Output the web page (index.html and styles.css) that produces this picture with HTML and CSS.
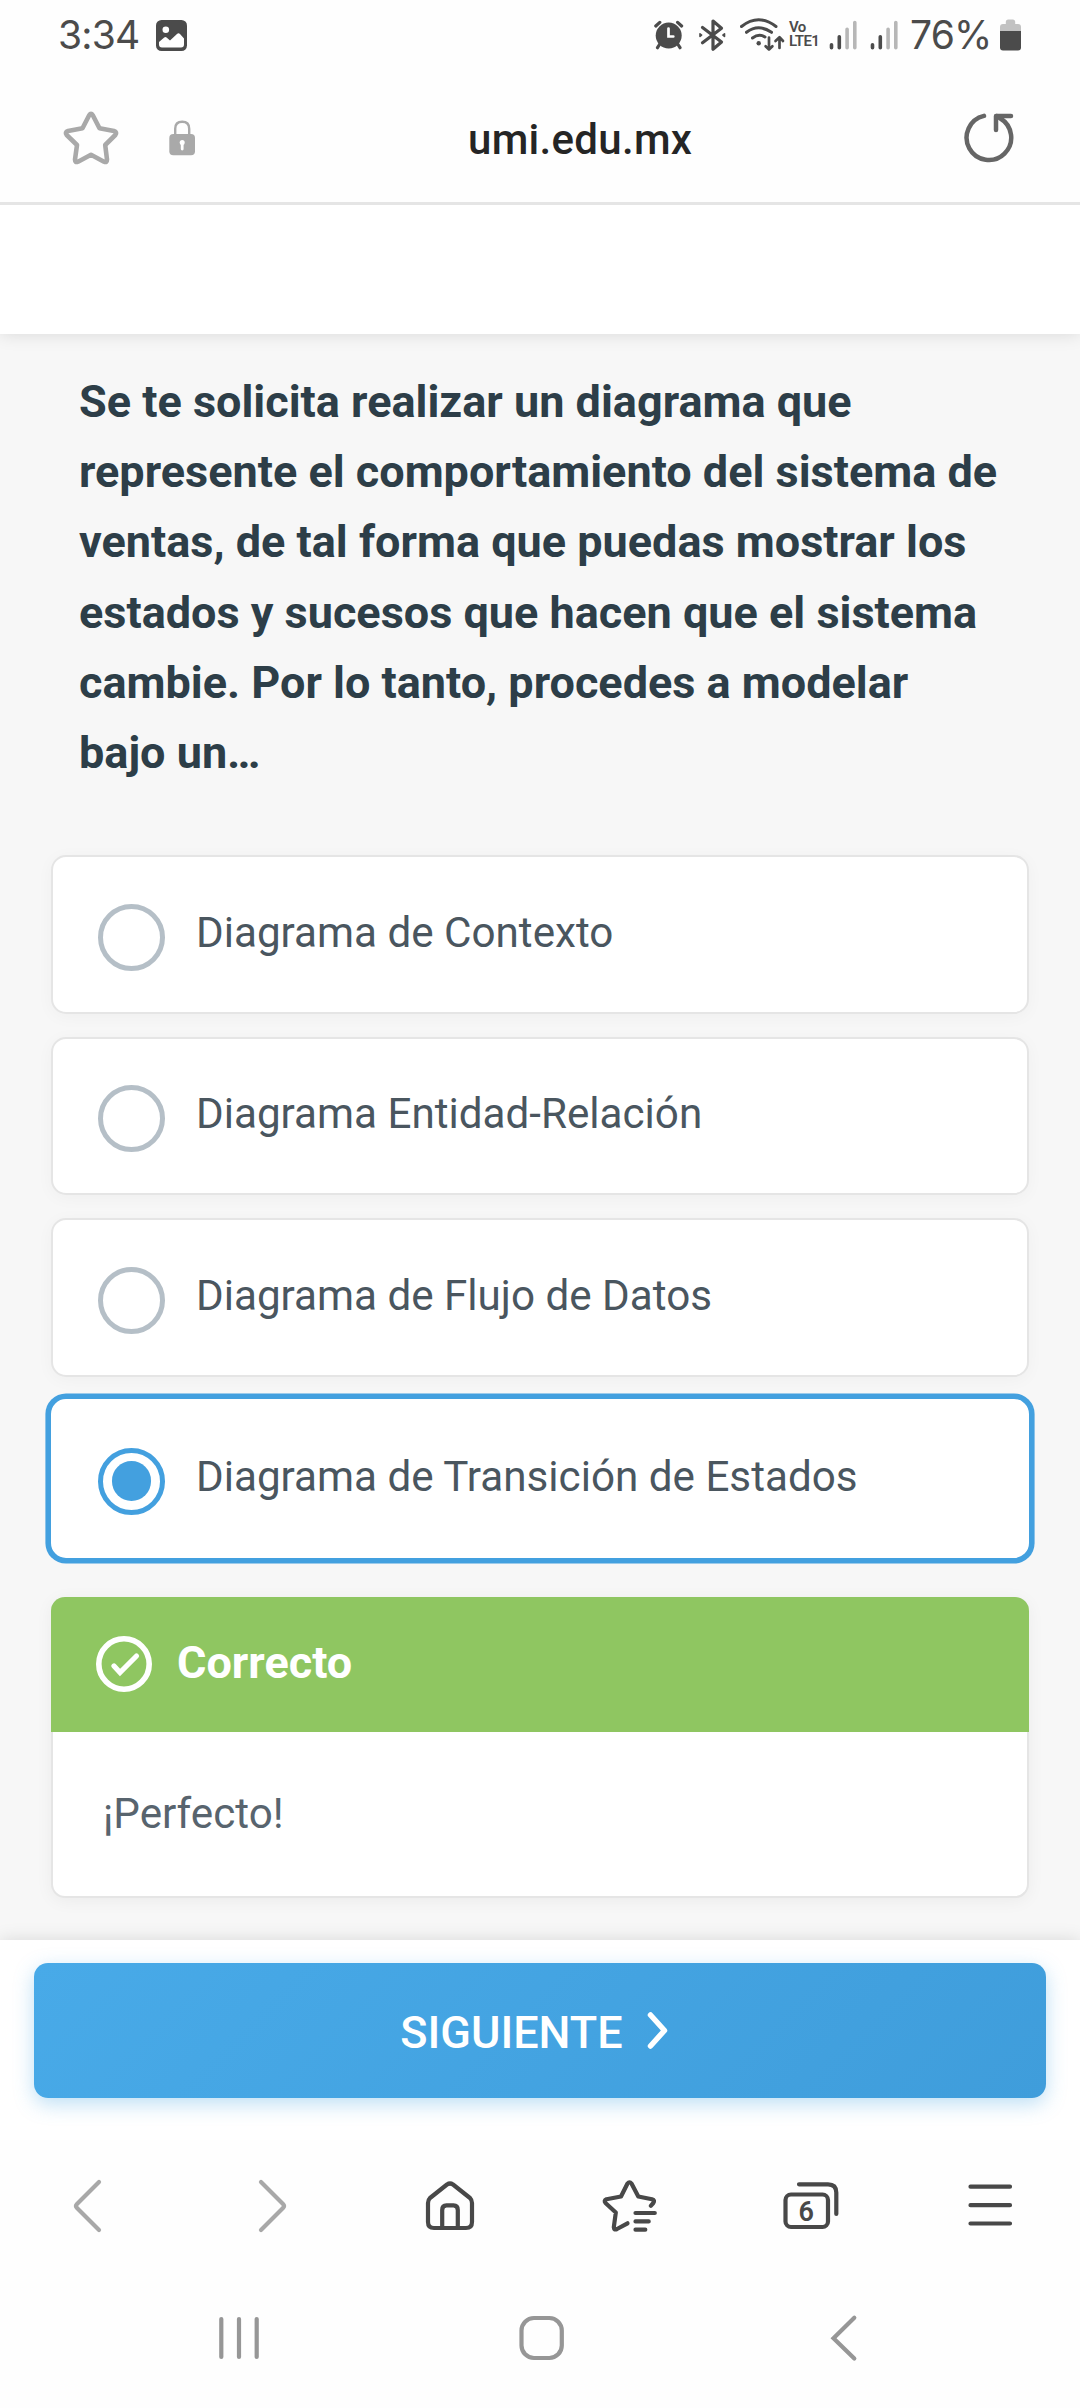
FILE: index.html
```html
<!DOCTYPE html>
<html lang="es">
<head>
<meta charset="utf-8">
<title>umi.edu.mx</title>
<link rel="stylesheet" href="styles.css">
</head>
<body>
<div class="status">
  <span class="clock">3:34</span>
  <svg class="ic photo" width="31" height="32" viewBox="156 20 31 32"><rect x="156" y="20" width="31" height="31" rx="5.5" fill="#4b4b4b"/><circle cx="165.8" cy="29.8" r="3.3" fill="#fff"/><path d="M159 42l5.2-4.6q1.2-.8 2.400 0l3.400 3.200 7-6.600q1.500-1.300 3 0l4 4.600v6q0 3-3 3h-19q-3 0-3-3z" fill="#fff"/></svg>
  <div class="indicators">
    <svg width="30" height="32" viewBox="654 19 30 32" fill="none" stroke="#4b4b4b" stroke-width="3.2" stroke-linecap="round"><circle cx="668.7" cy="35.6" r="13" fill="#4b4b4b" stroke="none"/><path d="M655.8 26l4-3.6M681.6 26l-4-3.6M659.500 44.500l-2 3.200M678 44.500l2 3.200"/><path d="M668.500 28.500v8h4.800" stroke="#fff" stroke-width="2.700"/></svg>
    <svg class="bt" width="29" height="34" viewBox="698 18 29 34" fill="none" stroke="#4b4b4b" stroke-width="3.2" stroke-linecap="round" stroke-linejoin="round"><path d="M702.500 27.500l19 14.500-8.500 7.300V21l8.500 7.300-19 14.500"/><path d="M700 33.800v2.600l1.600-1.300zM724.500 33.800v2.600l-1.600-1.300z" stroke-width="1.600"/></svg>
    <svg class="wifi" width="45" height="35" viewBox="740 17 45 35" fill="none" stroke="#4b4b4b" stroke-width="3" stroke-linecap="round" stroke-linejoin="round"><path d="M741.500 26.500q17-13.500 34.500 0M746.500 32.300q12-9 25 0M752.500 38q6.500-5 12.500-1"/><circle cx="758.700" cy="43.300" r="2.200" fill="#4b4b4b" stroke="none"/><path d="M769 37.500v12M765.600 46.200l3.400 3.400 3.400-3.400M779.500 48v-10M775.500 41l4-3.800 3.500 3.800" stroke-width="2.700"/></svg>
    <div class="volte"><span>Vo</span><span>LTE1</span></div>
    <svg class="sig1" width="28" height="31" viewBox="828.500 19.500 28 31" fill="none" stroke="#4b4b4b" stroke-width="3.600" stroke-linecap="round"><path d="M831 44.200v3M838.800 36.300v10.900"/><path d="M846.600 28.800v18.400M854.300 22v25.200" stroke="#b7b7b7"/></svg>
    <svg class="sig2" width="28" height="31" viewBox="828.500 19.500 28 31" fill="none" stroke="#4b4b4b" stroke-width="3.600" stroke-linecap="round"><path d="M831 44.200v3M838.800 36.300v10.900"/><path d="M846.600 28.800v18.400M854.300 22v25.200" stroke="#b7b7b7"/></svg>
    <span class="percent">76%</span>
    <svg class="battery" width="21" height="32" viewBox="1000 19 21 32"><path d="M1000 32v-5q0-3 3-3h2.800v-2q0-2.500 2.500-2.500h4.400q2.500 0 2.500 2.500v2h2.800q3 0 3 3v5z" fill="#c2c2c2"/><path d="M1000 31h21v16.500q0 3-3 3h-15q-3 0-3-3z" fill="#4b4b4b"/></svg>
  </div>
</div>

<header class="address">
  <svg width="56" height="56" viewBox="63 110 56 56" fill="none" stroke="#a9a9a9" stroke-width="4.600" stroke-linejoin="round"><path d="M89.200 115.200Q91 112.500 92.800 115.200L99.500 128.300L114 131Q117.500 132.200 115.300 135L105.200 145L107 159.500Q107 163 104 161.700L91 154.800L78 161.700Q75 163 75 159.500L77 145L66.700 135Q64.500 132.200 68 131L82.500 128.300Z"/></svg>
  <svg class="lock" width="28" height="38" viewBox="168 119 28 38"><rect x="169.300" y="134" width="25.700" height="21.300" rx="4" fill="#a9a9a9"/><path d="M175.200 136v-7.200q0-7 7-7t7 7V136" fill="none" stroke="#a9a9a9" stroke-width="2.400"/><path d="M182.200 142.500v6.500" stroke="#fff" stroke-width="2.800" stroke-linecap="round"/><circle cx="182.200" cy="142.500" r="2.500" fill="#fff"/></svg>
  <span class="host">umi.edu.mx</span>
  <svg class="reload" width="52" height="54" viewBox="963 110 52 54" fill="none" stroke="#666" stroke-width="4.500" stroke-linecap="round" stroke-linejoin="round"><path d="M984 115.900A22.300 22.300 0 1 0 1000 118.300L997 116M1011 116H996V130"/></svg>
</header>

<div class="page-top"></div>

<main class="quiz">
  <h1 class="question">Se te solicita realizar un diagrama que represente el comportamiento del sistema de ventas, de tal forma que puedas mostrar los estados y sucesos que hacen que el sistema cambie. Por lo tanto, procedes a modelar bajo un…</h1>
  <div class="options">
    <label class="option"><span class="radio"></span><span class="label">Diagrama de Contexto</span></label>
    <label class="option"><span class="radio"></span><span class="label">Diagrama Entidad-Relación</span></label>
    <label class="option"><span class="radio"></span><span class="label">Diagrama de Flujo de Datos</span></label>
    <label class="option selected"><span class="radio"></span><span class="label">Diagrama de Transición de Estados</span></label>
  </div>
  <section class="feedback">
    <div class="feedback-head">
      <svg width="56" height="56" viewBox="0 0 56 56" fill="none" stroke="#fff"><circle cx="28" cy="28" r="25.200" stroke-width="5.600"/><path d="M18 30l6 6.500L40.500 20" stroke-width="5.200" stroke-linecap="round"/></svg>
      <span>Correcto</span>
    </div>
    <p class="feedback-body">¡Perfecto!</p>
  </section>
</main>

<footer class="action">
  <button class="next"><span>SIGUIENTE</span><svg width="22" height="38" viewBox="0 0 22 38" fill="none" stroke="#fff" stroke-width="5.500" stroke-linecap="round" stroke-linejoin="round"><path d="M3.500 3L17.500 18.500 3.500 34"/></svg></button>
</footer>

<nav class="toolbar">
  <svg viewBox="60 2176 60 60" stroke="#a8a8a8"><path d="M99 2182L77 2204Q75 2206 77 2208L99 2230"/></svg>
  <svg viewBox="240.500 2176 60 60" stroke="#a8a8a8"><path d="M261.500 2182L283.500 2204Q285.500 2206 283.500 2208L261.500 2230"/></svg>
  <svg viewBox="420 2176 60 60"><path d="M447 2184.500Q450 2182.500 453 2184.500L470 2198Q472 2200 472 2203V2222Q472 2228 466 2228H434Q428 2228 428 2222V2203Q428 2200 430 2198ZM442.200 2228V2210Q442.200 2205.400 446.500 2205.400H453.500Q457.800 2205.400 457.800 2210V2228"/></svg>
  <svg viewBox="600 2176 60 60"><path d="M650.800 2205.800L653.300 2203Q655.300 2200.200 652 2199.200L638.300 2196.500L631.500 2183.500Q629.500 2181 627.500 2183.500L621 2196.500L606.500 2199.200Q603.500 2200.500 605.500 2203L615.800 2212.500L613.800 2227.200Q614 2230.500 617 2229L627.500 2223.300M635.500 2213H654.800M635.500 2221.400H648.700M635.500 2229.700H645.300"/></svg>
  <svg viewBox="780 2176 60 60"><rect x="785.500" y="2194.500" width="42.500" height="32.500" rx="5.500"/><path d="M799 2184.300H828Q836.300 2184.300 836.300 2192.500V2214"/><text class="tab-count" x="806.300" y="2221">6</text></svg>
  <svg viewBox="960 2176 60 60"><path d="M970.500 2186.700H1010M970.500 2205.200H1010M970.500 2223.500H1010"/></svg>
</nav>

<div class="sysnav">
  <svg viewBox="211 2310 56 56"><path d="M221.300 2319V2357M239 2319V2357M256.700 2319V2357"/></svg>
  <svg viewBox="513.500 2310 56 56"><rect x="521" y="2318" width="40.300" height="40" rx="12.500"/></svg>
  <svg viewBox="816 2310 56 56"><path d="M854.300 2317.700L833.500 2338.200L854.300 2358.500"/></svg>
</div>
</body>
</html>
```

FILE: styles.css
```css
* { box-sizing: border-box; }

body {
  margin: 0;
  width: 1080px;
  height: 2408px;
  display: flex;
  flex-direction: column;
  overflow: hidden;
  background: #fff;
  font-family: Roboto, "Noto Sans", sans-serif;
}

svg { display: block; flex: none; }

/* Phone status bar */
.status {
  height: 72px;
  padding: 0 59px 0 58px;
  display: flex;
  align-items: flex-start;
  background: #fefefe;
  color: #4b4b4b;
  position: relative;
  z-index: 1;
}
.clock, .percent {
  font-family: Inter, Roboto, sans-serif;
  font-size: 39px;
  line-height: 46px;
  font-weight: 400;
  letter-spacing: -0.8px;
  padding-top: 12px;
  white-space: nowrap;
}
.clock { width: 98px; }
.photo { margin-top: 20px; }
.indicators { margin-left: auto; display: flex; align-items: flex-start; }
.indicators svg { margin-top: 19px; }
.indicators .bt { margin: 18px 0 0 14px; }
.indicators .wifi { margin: 17px 0 0 13px; }
.volte {
  width: 36px;
  margin: 20px 0 0 4px;
  display: flex;
  flex-direction: column;
  gap: 0;
  font-size: 15px;
  line-height: 14px;
  font-weight: 600;
  letter-spacing: -0.6px;
}
.indicators .sig1 { margin: 19.5px 0 0 3.5px; }
.indicators .sig2 { margin: 19.5px 0 0 13px; }
.percent { width: 82px; margin-left: 12.5px; margin-right: 8px; }
.percent + svg { margin-right: 0; }

/* Browser address bar */
.address {
  height: 133px;
  padding: 38px 65px 0 63px;
  display: flex;
  align-items: flex-start;
  background: #fefefe;
  border-bottom: 3px solid #e5e5e5;
  position: relative;
  z-index: 1;
}
.lock { margin: 9px 0 0 49px; }
.host {
  width: 226px;
  margin-left: 272px;
  padding-top: 5px;
  font-size: 42px;
  line-height: 50px;
  font-weight: 500;
  letter-spacing: 0.3px;
  color: #252525;
  white-space: nowrap;
}
.reload { margin-left: auto; }

.page-top {
  height: 129px;
  background: #fff;
  box-shadow: 0 0 17px rgba(0, 0, 0, 0.13);
  position: relative;
}

/* Quiz */
.quiz {
  height: 1606px;
  padding: 32.8px 51px 0;
  background: #f7f7f7;
}
.question {
  margin: 0 28px;
  font-size: 45px;
  line-height: 70.25px;
  font-weight: 700;
  color: #2d3e48;
}
.options {
  margin-top: 66.9px;
  display: flex;
  flex-direction: column;
  gap: 22.8px;
}
.option {
  height: 158.6px;
  padding-left: 45px;
  display: flex;
  align-items: center;
  gap: 31px;
  background: #fff;
  border: 2px solid #e5e5e5;
  border-radius: 15px;
  box-shadow: 0 3px 17px rgba(0, 0, 0, 0.035);
}
.radio {
  width: 67px;
  height: 67px;
  margin-top: 6px;
  display: grid;
  place-items: center;
  border: 5.6px solid #b5bfc7;
  border-radius: 50%;
}
.label {
  padding-bottom: 3px;
  font-size: 42.19px;
  line-height: 56px;
  color: #4a565f;
}
.selected {
  border-color: #fff;
  box-shadow: 0 0 0 5.6px #43a0df;
}
.selected .radio { margin-top: 5px; border-color: #43a0df; }
.selected .radio::before {
  content: "";
  width: 39.4px;
  height: 39.4px;
  border-radius: 50%;
  background: #43a0df;
}

.feedback {
  height: 301px;
  margin-top: 39px;
  background: #fff;
  border: 2px solid #e5e5e5;
  border-top: 0;
  border-radius: 14px;
  box-shadow: 0 3px 17px rgba(0, 0, 0, 0.05);
}
.feedback-head {
  height: 135px;
  margin: 0 -2px;
  padding: 0 45px;
  display: flex;
  align-items: center;
  gap: 25px;
  background: #8fc661;
  border-radius: 14px 14px 0 0;
  color: #fff;
  font-size: 45px;
  font-weight: 700;
}
.feedback-head span { padding-bottom: 4px; }
.feedback-body {
  margin: 0;
  padding: 54px 50px 0;
  font-size: 42.19px;
  line-height: 56px;
  color: #58646e;
}

/* Bottom action */
.action {
  height: 200px;
  padding: 23px 34px 0;
  background: #fff;
  box-shadow: 0 0 17px rgba(0, 0, 0, 0.13);
  position: relative;
}
.next {
  width: 100%;
  height: 135px;
  padding: 0 11px 0 0;
  display: flex;
  align-items: center;
  justify-content: center;
  gap: 24px;
  border: 0;
  border-radius: 14px;
  background: linear-gradient(135deg, #48aae8, #3f9ddb);
  box-shadow: 0 6px 20px rgba(67, 163, 226, 0.35);
  color: #fff;
  font: 500 45px Roboto, sans-serif;
}
.next span { padding-top: 4px; }

/* Browser toolbar */
.toolbar {
  height: 132px;
  padding: 36px 60px;
  display: flex;
  justify-content: space-between;
  background: #fefefe;
  position: relative;
  z-index: 1;
}
.toolbar svg {
  width: 60px;
  height: 60px;
  fill: none;
  stroke-width: 4.2;
  stroke-linecap: round;
  stroke-linejoin: round;
}
.toolbar svg:not([stroke]) { stroke: #484848; }
.tab-count {
  font-size: 27px;
  font-weight: 600;
  text-anchor: middle;
  fill: #484848;
  stroke: none;
}

/* System navigation */
.sysnav {
  height: 136px;
  padding: 38px 208px 0 211px;
  display: flex;
  justify-content: space-between;
  background: #fefefe;
}
.sysnav svg {
  width: 56px;
  height: 56px;
  fill: none;
  stroke: #969696;
  stroke-width: 4.2;
  stroke-linecap: round;
}
```
